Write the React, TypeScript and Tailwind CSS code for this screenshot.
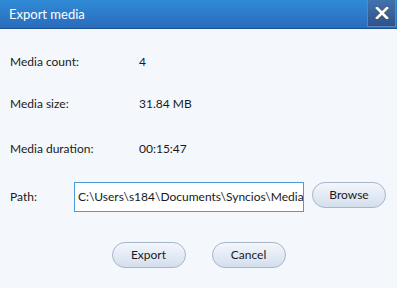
export default function App() {
  const rows = [
    { label: 'Media count:', value: '4', mt: 'mt-[24px]' },
    { label: 'Media size:', value: '31.84 MB', mt: 'mt-[24px]' },
    { label: 'Media duration:', value: '00:15:47', mt: 'mt-[27px]' },
  ];

  return (
    <div className="w-[397px] h-[288px] bg-[#f4f7fb] font-['Lato',sans-serif] text-[12px] text-[#1a1a1a] overflow-hidden">
      <div className="h-[29px] flex items-start justify-between bg-gradient-to-b from-[#2f8ad6] to-[#2a6cbc] border-b border-[#1a4f91]">
        <span className="text-white text-[13px] pl-[9px] pt-[5px]">Export media</span>
        <button className="mr-[1px] w-[29px] h-[27px] flex items-center justify-center bg-gradient-to-b from-[#4472ad] to-[#2d5389] border-l border-r border-b border-[#5a86c0]">
          <svg width="14" height="12" viewBox="0 0 14 12">
            <path d="M2 1 L12 11 M12 1 L2 11" stroke="#555" strokeWidth="4" strokeLinecap="square" />
            <path d="M2 1 L12 11 M12 1 L2 11" stroke="#fff" strokeWidth="2.6" strokeLinecap="square" />
          </svg>
        </button>
      </div>

      <div className="pl-[10px]">
        {rows.map((r) => (
          <div key={r.label} className={`${r.mt} h-[18px] flex items-center`}>
            <span className="w-[129px]">{r.label}</span>
            <span>{r.value}</span>
          </div>
        ))}

        <div className="mt-[24px] flex items-start">
          <span className="w-[64px] h-[30px] flex items-center">Path:</span>
          <div className="w-[230px] h-[30px] border border-[#4b9ad9] bg-white flex items-center pl-[3px] overflow-hidden whitespace-nowrap">
            C:\Users\s184\Documents\Syncios\Media
          </div>
          <button className="ml-[8px] w-[74px] h-[26px] rounded-full border border-[#a6b6cb] bg-gradient-to-b from-[#f3f7fc] to-[#d4dfed]">
            Browse
          </button>
        </div>

        <div className="mt-[30px] flex justify-center gap-[26px] pr-[10px]">
          <button className="w-[74px] h-[26px] rounded-full border border-[#a6b6cb] bg-gradient-to-b from-[#f3f7fc] to-[#d4dfed]">
            Export
          </button>
          <button className="w-[74px] h-[26px] rounded-full border border-[#a6b6cb] bg-gradient-to-b from-[#f3f7fc] to-[#d4dfed]">
            Cancel
          </button>
        </div>
      </div>
    </div>
  );
}
